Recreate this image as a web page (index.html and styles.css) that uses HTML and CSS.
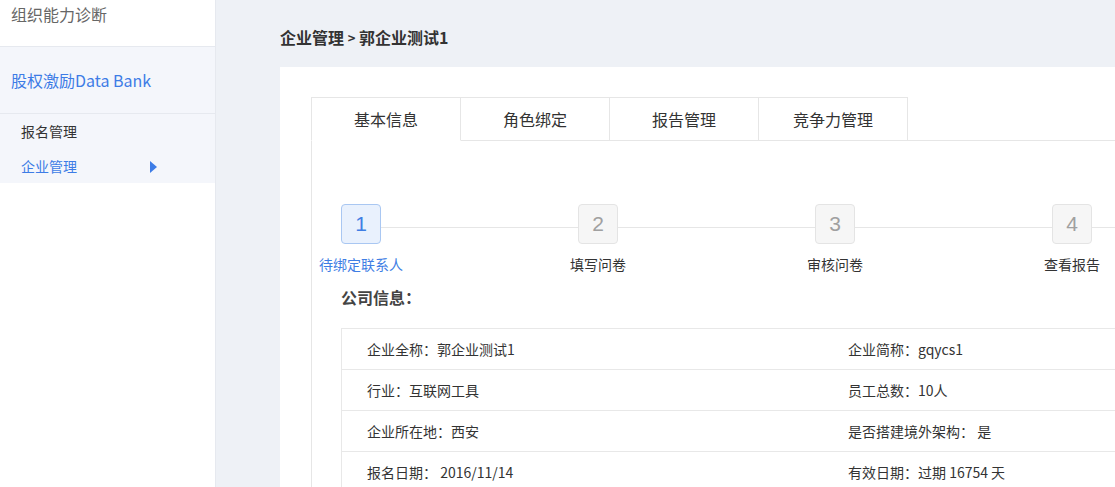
FILE: index.html
```html
<!DOCTYPE html>
<html lang="zh-CN">
<head>
<meta charset="utf-8">
<title>企业管理</title>
<link rel="stylesheet" href="styles.css">
</head>
<body>
<div class="layout">
  <aside class="sidebar">
    <div class="nav-top">组织能力诊断</div>
    <div class="nav-group">股权激励Data Bank</div>
    <ul class="submenu">
      <li class="sub-item">报名管理</li>
      <li class="sub-item active">企业管理<span class="caret"></span></li>
    </ul>
  </aside>
  <main class="main">
    <div class="breadcrumb">企业管理 <span class="sep">&gt;</span> 郭企业测试1</div>
    <section class="card">
      <div class="tabs">
        <div class="tab active">基本信息</div>
        <div class="tab">角色绑定</div>
        <div class="tab">报告管理</div>
        <div class="tab">竞争力管理</div>
        <div class="tab-fill"></div>
      </div>
      <div class="panel">
        <div class="steps">
          <div class="step current"><div class="step-box">1</div><div class="step-label">待绑定联系人</div></div>
          <div class="step"><div class="step-box">2</div><div class="step-label">填写问卷</div></div>
          <div class="step"><div class="step-box">3</div><div class="step-label">审核问卷</div></div>
          <div class="step"><div class="step-box">4</div><div class="step-label">查看报告</div></div>
        </div>
        <h3 class="section-title">公司信息：</h3>
        <table class="info">
          <tr><td>企业全称：郭企业测试1</td><td>企业简称：gqycs1</td></tr>
          <tr><td>行业：互联网工具</td><td>员工总数：10人</td></tr>
          <tr><td>企业所在地：西安</td><td>是否搭建境外架构： 是</td></tr>
          <tr><td>报名日期： 2016/11/14</td><td>有效日期：过期 16754 天</td></tr>
        </table>
      </div>
    </section>
  </main>
</div>
</body>
</html>
```
FILE: styles.css
```css
html, body {
  margin: 0;
  padding: 0;
  height: 100%;
  overflow: hidden;
}
body {
  font-family: "Noto Sans CJK SC", "Liberation Sans", sans-serif;
  color: #333;
  background: #eef1f6;
}
.layout {
  display: flex;
  height: 100%;
}
.sidebar {
  width: 215px;
  flex: none;
  background: #fff;
  border-right: 1px solid #e6e9ef;
}
.nav-top {
  height: 46px;
  line-height: 28px;
  padding-left: 11px;
  font-size: 16px;
  color: #666;
  border-bottom: 1px solid #e6e9ef;
}
.nav-group {
  height: 66px;
  line-height: 66px;
  padding-left: 11px;
  font-size: 16px;
  color: #3d7ce6;
  background: #f4f6fb;
  border-bottom: 1px solid #e6e9ef;
}
.submenu {
  list-style: none;
  margin: 0;
  padding: 0;
  background: #f4f6fb;
  height: 69px;
}
.sub-item {
  position: relative;
  height: 35px;
  line-height: 35px;
  padding-left: 21px;
  font-size: 14px;
  color: #333;
}
.sub-item.active {
  color: #3d7ce6;
}
.caret {
  position: absolute;
  left: 150px;
  top: 12px;
  width: 0;
  height: 0;
  border-top: 6px solid transparent;
  border-bottom: 6px solid transparent;
  border-left: 7px solid #3d7ce6;
}
.main {
  flex: 1;
  min-width: 0;
  padding-left: 64px;
  overflow: hidden;
}
.breadcrumb {
  margin-top: 25px;
  height: 24px;
  line-height: 24px;
  font-size: 16px;
  font-weight: bold;
  color: #333;
  white-space: nowrap;
}
.breadcrumb .sep {
  font-size: 13px;
  line-height: 1;
  vertical-align: 1px;
}
.card {
  margin-top: 18px;
  width: 1100px;
  background: #fff;
  padding: 30px 0 40px 31px;
  box-sizing: border-box;
}
.tabs {
  display: flex;
}
.tab {
  width: 148px;
  flex: none;
  height: 42px;
  line-height: 42px;
  text-align: center;
  font-size: 16px;
  color: #333;
  border-top: 1px solid #e6e6e6;
  border-right: 1px solid #e6e6e6;
  border-bottom: 1px solid #e6e6e6;
}
.tab:first-child {
  border-left: 1px solid #e6e6e6;
}
.tab.active {
  border-bottom-color: #fff;
}
.tab-fill {
  flex: 1;
  border-bottom: 1px solid #e6e6e6;
}
.panel {
  border-left: 1px solid #e6e6e6;
  padding: 63px 0 40px 29px;
}
.steps {
  position: relative;
  display: flex;
  gap: 157px;
  margin-left: -20px;
}
.steps::before {
  content: "";
  position: absolute;
  left: 60px;
  top: 23px;
  width: 2000px;
  height: 1px;
  background: #e6e6e6;
}
.step {
  position: relative;
  width: 80px;
  flex: none;
  display: flex;
  flex-direction: column;
  align-items: center;
}
.step-box {
  width: 38px;
  height: 38px;
  border: 1px solid #e4e4e4;
  border-radius: 4px;
  background: #f6f6f6;
  color: #a0a0a0;
  font-family: "Liberation Sans", Arial, sans-serif;
  font-size: 21px;
  line-height: 38px;
  text-align: center;
}
.step-label {
  margin-top: 10px;
  line-height: 20px;
  font-size: 14px;
  color: #333;
  white-space: nowrap;
}
.step.current .step-box {
  background: #e9f1fd;
  border-color: #a9c7f2;
  color: #3f7ee4;
}
.step.current .step-label {
  color: #3f7ee4;
}
.section-title {
  margin: 11px 0 0 0;
  line-height: 24px;
  font-size: 16px;
  font-weight: bold;
  color: #444;
}
.info {
  margin-top: 19px;
  width: 964px;
  border-collapse: collapse;
  border: 1px solid #e8e8e8;
  font-size: 14px;
  color: #333;
}
.info td {
  width: 50%;
  height: 40px;
  padding: 0 0 0 25px;
  border-bottom: 1px solid #e8e8e8;
  white-space: nowrap;
}
```
